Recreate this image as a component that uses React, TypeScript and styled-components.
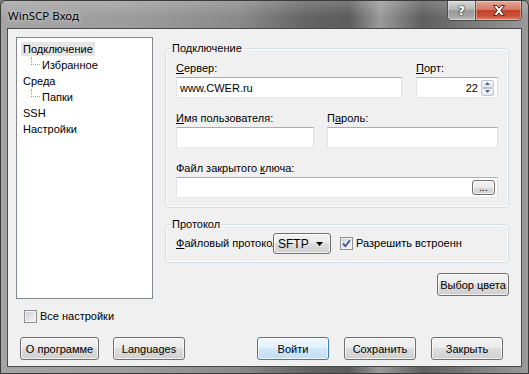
import styled, { createGlobalStyle } from 'styled-components'

const GlobalStyle = createGlobalStyle`
  html, body {
    margin: 0;
    padding: 0;
  }
  body {
    width: 529px;
    height: 374px;
    overflow: hidden;
    background: #7a7a7a;
    font-family: 'Liberation Sans', Arial, sans-serif;
    font-size: 11px;
    color: #000;
  }
  * {
    box-sizing: border-box;
  }
`

const Window = styled.div`
  width: 529px;
  height: 374px;
  display: flex;
  flex-direction: column;
  border: 1px solid #3b3b3b;
  border-radius: 6px 6px 0 0;
  overflow: hidden;
  background: linear-gradient(
    90deg,
    #a4a4a4 0%,
    #9c9c9c 25%,
    #8a8a8a 45%,
    #646464 58%,
    #5c5c5c 66%,
    #9a9a9a 72%,
    #5f5f5f 80%,
    #7d7d7d 90%,
    #9a9a9a 100%
  );
`

const TitleBar = styled.div`
  height: 27px;
  flex-shrink: 0;
  display: flex;
  align-items: flex-start;
  justify-content: space-between;
  padding: 0 6px 0 7px;
  background: linear-gradient(180deg, rgba(255, 255, 255, 0.18), rgba(255, 255, 255, 0) 60%);
`

const Title = styled.div`
  margin-top: 7px;
  font-family: 'Noto Sans', 'Liberation Sans', sans-serif;
  font-size: 11.5px;
  line-height: 15px;
  color: #000;
  text-shadow: 0 0 6px rgba(255, 255, 255, 0.6), 0 0 3px rgba(255, 255, 255, 0.4);
`

const CaptionGroup = styled.div`
  display: flex;
  height: 20px;
  border: 1px solid #4b4b4b;
  border-top: none;
  border-radius: 0 0 5px 5px;
  overflow: hidden;
`

const CaptionButton = styled.div<{ $close?: boolean }>`
  width: ${p => (p.$close ? 46 : 27)}px;
  display: flex;
  align-items: center;
  justify-content: center;
  border-left: ${p => (p.$close ? '1px solid #4b4b4b' : 'none')};
  box-shadow: inset 0 0 0 1px rgba(255, 255, 255, 0.35);
  background: ${p =>
    p.$close
      ? 'linear-gradient(180deg, #e6a697 0%, #d47a66 45%, #c2442a 50%, #c9533a 80%, #e08a6f 100%)'
      : 'linear-gradient(180deg, #d8d8d8 0%, #b5b5b5 45%, #9a9a9a 50%, #a3a3a3 80%, #c2c2c2 100%)'};
`

const HelpGlyph = styled.span`
  font-family: 'DejaVu Sans', sans-serif;
  font-weight: bold;
  font-size: 12px;
  line-height: 12px;
  color: #fff;
  text-shadow: 0 0 1px #333, 0 0 1px #333, 0 0 2px #444;
`

const Client = styled.div`
  flex: 1;
  margin: 0 6px 6px;
  border: 1px solid #4a4a4a;
  background: #f0f0f0;
  display: flex;
  flex-direction: column;
`

const TopSection = styled.div`
  display: flex;
  align-items: flex-start;
  padding: 8px 0 0 8px;
`

const Tree = styled.div`
  width: 137px;
  height: 262px;
  flex-shrink: 0;
  border: 1px solid #828790;
  background: #fff;
  padding-top: 3px;
`

const TreeRow = styled.div<{ $child?: boolean }>`
  height: 16px;
  display: flex;
  align-items: center;
  padding-left: ${p => (p.$child ? 14 : 4)}px;
`

const Connector = styled.span`
  align-self: flex-start;
  width: 9px;
  height: 8px;
  border-left: 1px dotted #a0a0a0;
  border-bottom: 1px dotted #a0a0a0;
`

const TreeLabel = styled.span<{ $selected?: boolean }>`
  padding: 0 2px;
  line-height: 14px;
  background: ${p => (p.$selected ? '#e6e6e6' : 'transparent')};
`

const RightPanel = styled.div`
  margin-left: 12px;
  padding-top: 5px;
  width: 344px;
  display: flex;
  flex-direction: column;
`

const Group = styled.fieldset<{ $gap?: number }>`
  margin: 0;
  min-width: 0;
  border: 1px solid #d5dfe5;
  border-radius: 3px;
  box-shadow: inset 0 0 0 1px #fff;
  display: flex;
  flex-direction: column;
  gap: 14px;
`

const Legend = styled.legend`
  margin-left: -5px;
  padding: 0 1px;
  line-height: 13px;
`

const ConnectionGroup = styled(Group)`
  padding: 7px 10px 9px;
`

const ProtocolGroup = styled(Group)`
  margin-top: 10px;
  padding: 2px 10px 8px;
`

const FieldRow = styled.div<{ $gap: number }>`
  display: flex;
  gap: ${p => p.$gap}px;
`

const Field = styled.div<{ $width: number }>`
  width: ${p => p.$width}px;
  display: flex;
  flex-direction: column;
  gap: 2px;
`

const Label = styled.span`
  line-height: 13px;
  white-space: nowrap;
`

const Key = styled.span`
  text-decoration: underline;
`

const TextBox = styled.div<{ $align?: string }>`
  height: 21px;
  display: flex;
  align-items: center;
  justify-content: ${p => (p.$align === 'right' ? 'flex-end' : 'flex-start')};
  padding: 0 3px;
  background: #fff;
  border: 1px solid #abadb3;
  border-color: #abadb3 #dbdfe6 #e3e9ef #e2e3ea;
`

const Spinner = styled.div`
  display: flex;
  flex-direction: column;
  margin-left: 3px;
`

const SpinPart = styled.div`
  width: 13px;
  height: 8px;
  display: flex;
  align-items: center;
  justify-content: center;
  border: 1px solid #b9c3d3;
  border-radius: 2px;
  background: linear-gradient(180deg, #fafbfc, #e3e7ed);
`

const BrowseButton = styled.div`
  margin-left: auto;
  margin-right: -1px;
  width: 23px;
  height: 15px;
  display: flex;
  align-items: flex-end;
  justify-content: center;
  padding-bottom: 2px;
  border: 1px solid #707070;
  border-radius: 3px;
  font-size: 10px;
  line-height: 8px;
  background: linear-gradient(180deg, #f2f2f2 0%, #ebebeb 50%, #dddddd 50%, #cfcfcf 100%);
  box-shadow: inset 0 0 0 1px rgba(255, 255, 255, 0.7);
`

const ProtocolRow = styled.div`
  display: flex;
  align-items: center;
  height: 21px;
`

const ClippedLabel = styled.span<{ $width: number }>`
  width: ${p => p.$width}px;
  overflow: hidden;
  white-space: nowrap;
  line-height: 13px;
  flex-shrink: 0;
`

const Combo = styled.div`
  width: 58px;
  height: 21px;
  display: flex;
  align-items: center;
  justify-content: space-between;
  padding: 0 7px 0 4px;
  border: 1px solid #707070;
  border-radius: 3px;
  background: linear-gradient(180deg, #f2f2f2 0%, #ebebeb 50%, #dddddd 50%, #cfcfcf 100%);
  box-shadow: inset 0 0 0 1px rgba(255, 255, 255, 0.7);
  font-size: 12px;
`

const CheckLabel = styled.label<{ $indent?: number }>`
  display: flex;
  align-items: center;
  gap: 3px;
  margin-left: ${p => p.$indent ?? 0}px;
  line-height: 13px;
  white-space: nowrap;
`

const CheckBox = styled.span`
  width: 13px;
  height: 13px;
  flex-shrink: 0;
  display: flex;
  align-items: center;
  justify-content: center;
  border: 1px solid #8e8f8f;
  box-shadow: inset 0 0 0 1px #f4f4f4;
  background: linear-gradient(135deg, #c9cdd3 0%, #e4e6e9 55%, #f7f7f7 100%);
`

const ColorRow = styled.div`
  display: flex;
  justify-content: flex-end;
  margin-top: 10px;
`

const Button = styled.div<{ $width: number; $default?: boolean }>`
  width: ${p => p.$width}px;
  height: 23px;
  display: flex;
  align-items: center;
  justify-content: center;
  border: 1px solid ${p => (p.$default ? '#3c7fb1' : '#707070')};
  border-radius: 3px;
  white-space: nowrap;
  box-shadow: inset 0 0 0 1px rgba(255, 255, 255, 0.7);
  background: ${p =>
    p.$default
      ? 'linear-gradient(180deg, #eef7fd 0%, #e2f1fb 50%, #cfe7f8 50%, #c1dff4 100%)'
      : 'linear-gradient(180deg, #f2f2f2 0%, #ebebeb 50%, #dddddd 50%, #cfcfcf 100%)'};
`

const OptionsRow = styled.div`
  margin-top: 11px;
  padding-left: 16px;
  display: flex;
`

const ButtonBar = styled.div`
  margin-top: 14px;
  padding: 0 18px 0 12px;
  display: flex;
  justify-content: space-between;
`

const ButtonGroup = styled.div`
  display: flex;
  gap: 14px;
`

const RightButtons = styled(ButtonGroup)`
  gap: 15px;
`

function Tick() {
  return (
    <svg width="9" height="9" viewBox="0 0 9 9">
      <path d="M1 4.6 L3.4 7.2 L8 1.3" fill="none" stroke="#3b5596" strokeWidth="1.8" />
    </svg>
  )
}

function Arrow({ up }: { up?: boolean }) {
  return (
    <svg width="5" height="3" viewBox="0 0 5 3">
      <path d={up ? 'M0 3 L2.5 0 L5 3 Z' : 'M0 0 L5 0 L2.5 3 Z'} fill="#4e6183" />
    </svg>
  )
}

function CloseGlyph() {
  return (
    <svg width="14" height="11" viewBox="0 0 14 11">
      <path
        d="M1.5 0.5 H4.8 L7 3.2 L9.2 0.5 H12.5 L8.8 5.5 L12.5 10.5 H9.2 L7 7.8 L4.8 10.5 H1.5 L5.2 5.5 Z"
        fill="#fff"
        stroke="#5a1f12"
        strokeWidth="1"
        strokeLinejoin="round"
      />
    </svg>
  )
}

const treeItems = [
  { text: 'Подключение', child: false, selected: true },
  { text: 'Избранное', child: true },
  { text: 'Среда', child: false },
  { text: 'Папки', child: true },
  { text: 'SSH', child: false },
  { text: 'Настройки', child: false },
]

export default function App() {
  return (
    <>
      <GlobalStyle />
      <Window>
        <TitleBar>
          <Title>WinSCP Вход</Title>
          <CaptionGroup>
            <CaptionButton>
              <HelpGlyph>?</HelpGlyph>
            </CaptionButton>
            <CaptionButton $close>
              <CloseGlyph />
            </CaptionButton>
          </CaptionGroup>
        </TitleBar>
        <Client>
          <TopSection>
            <Tree>
              {treeItems.map(item => (
                <TreeRow key={item.text} $child={item.child}>
                  {item.child && <Connector />}
                  <TreeLabel $selected={item.selected}>{item.text}</TreeLabel>
                </TreeRow>
              ))}
            </Tree>
            <RightPanel>
              <ConnectionGroup>
                <Legend>Подключение</Legend>
                <FieldRow $gap={14}>
                  <Field $width={226}>
                    <Label>
                      <Key>С</Key>ервер:
                    </Label>
                    <TextBox>www.CWER.ru</TextBox>
                  </Field>
                  <Field $width={82}>
                    <Label>
                      <Key>П</Key>орт:
                    </Label>
                    <TextBox $align="right">
                      22
                      <Spinner>
                        <SpinPart>
                          <Arrow up />
                        </SpinPart>
                        <SpinPart>
                          <Arrow />
                        </SpinPart>
                      </Spinner>
                    </TextBox>
                  </Field>
                </FieldRow>
                <FieldRow $gap={13}>
                  <Field $width={138}>
                    <Label>
                      <Key>И</Key>мя пользователя:
                    </Label>
                    <TextBox />
                  </Field>
                  <Field $width={171}>
                    <Label>
                      П<Key>а</Key>роль:
                    </Label>
                    <TextBox />
                  </Field>
                </FieldRow>
                <FieldRow $gap={0}>
                  <Field $width={322}>
                    <Label>
                      Файл закрытого <Key>к</Key>люча:
                    </Label>
                    <TextBox>
                      <BrowseButton>...</BrowseButton>
                    </TextBox>
                  </Field>
                </FieldRow>
              </ConnectionGroup>
              <ProtocolGroup>
                <Legend>Протокол</Legend>
                <ProtocolRow>
                  <ClippedLabel $width={97}>
                    <Key>Ф</Key>айловый протокол:
                  </ClippedLabel>
                  <Combo>
                    SFTP
                    <svg width="7" height="4" viewBox="0 0 7 4">
                      <path d="M0 0 H7 L3.5 4 Z" fill="#000" />
                    </svg>
                  </Combo>
                  <CheckLabel $indent={9}>
                    <CheckBox>
                      <Tick />
                    </CheckBox>
                    Разрешить встроенн
                  </CheckLabel>
                </ProtocolRow>
              </ProtocolGroup>
              <ColorRow>
                <Button $width={72}>Выбор цвета</Button>
              </ColorRow>
            </RightPanel>
          </TopSection>
          <OptionsRow>
            <CheckLabel>
              <CheckBox />
              Все настройки
            </CheckLabel>
          </OptionsRow>
          <ButtonBar>
            <ButtonGroup>
              <Button $width={79}>О программе</Button>
              <Button $width={72}>Languages</Button>
            </ButtonGroup>
            <RightButtons>
              <Button $width={72} $default>
                Войти
              </Button>
              <Button $width={72}>Сохранить</Button>
              <Button $width={72}>Закрыть</Button>
            </RightButtons>
          </ButtonBar>
        </Client>
      </Window>
    </>
  )
}
